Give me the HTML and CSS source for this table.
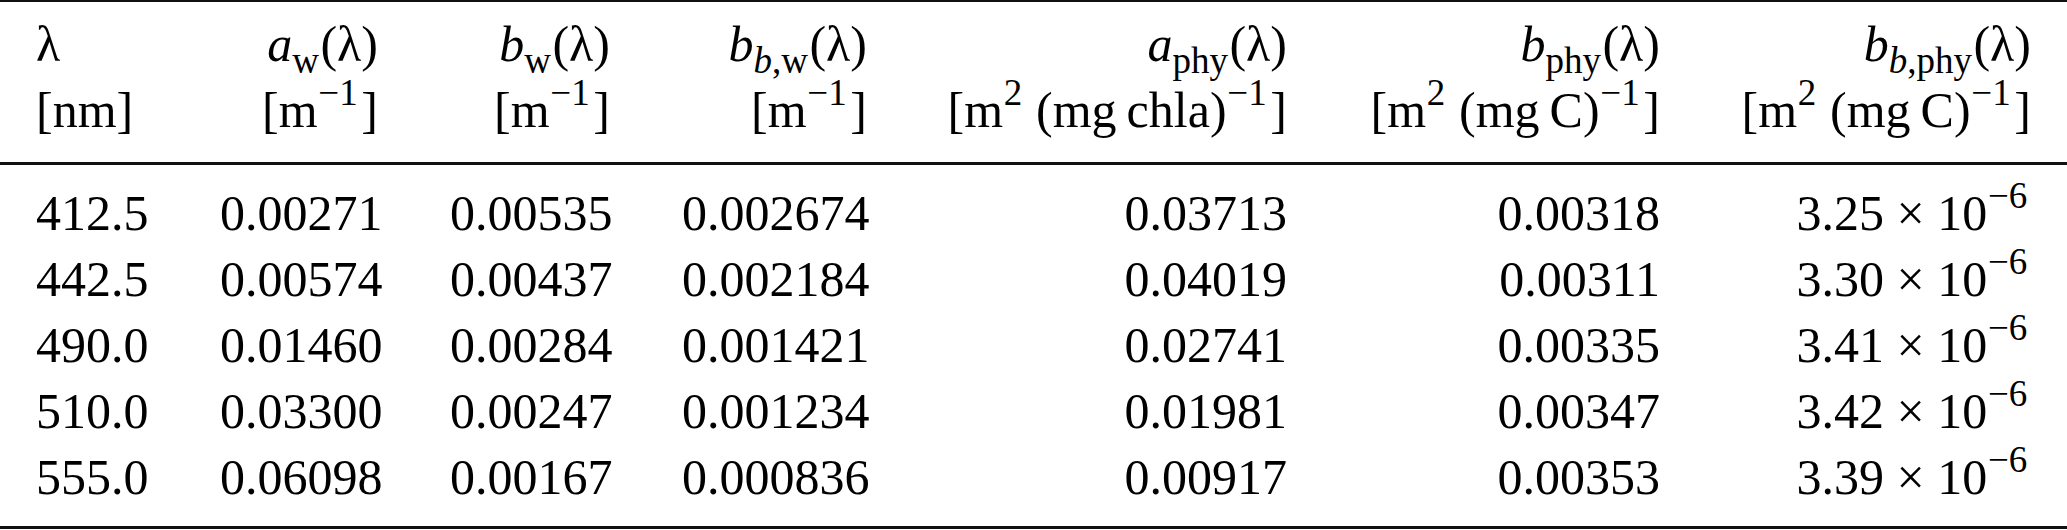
FILE: index.html
```html
<!DOCTYPE html>
<html lang="en">
<head>
    <meta charset="UTF-8">
    <meta name="viewport" content="width=device-width, initial-scale=1.0">
    <title>Optical constants</title>
    <link rel="stylesheet" href="styles.css">
</head>
<body>
    <table class="optics">
        <colgroup>
            <col class="c-lambda">
            <col class="c-aw">
            <col class="c-bw">
            <col class="c-bbw">
            <col class="c-aphy">
            <col class="c-bphy">
            <col class="c-bbphy">
        </colgroup>
        <thead>
            <tr class="head-row">
                <th class="left">λ</th>
                <th><i>a</i><sub>w</sub>(λ)</th>
                <th><i>b</i><sub>w</sub>(λ)</th>
                <th><i>b</i><sub><i>b</i>,w</sub>(λ)</th>
                <th><i>a</i><sub>phy</sub>(λ)</th>
                <th><i>b</i><sub>phy</sub>(λ)</th>
                <th><i>b</i><sub><i>b</i>,phy</sub>(λ)</th>
            </tr>
            <tr class="unit-row">
                <th class="left">[nm]</th>
                <th>[m<sup>−1</sup>]</th>
                <th>[m<sup>−1</sup>]</th>
                <th>[m<sup>−1</sup>]</th>
                <th>[m<sup>2</sup>&thinsp;(mg&thinsp;chla)<sup>−1</sup>]</th>
                <th>[m<sup>2</sup>&thinsp;(mg&thinsp;C)<sup>−1</sup>]</th>
                <th>[m<sup>2</sup>&thinsp;(mg&thinsp;C)<sup>−1</sup>]</th>
            </tr>
        </thead>
        <tbody>
            <tr>
                <td class="left">412.5</td>
                <td>0.00271</td>
                <td>0.00535</td>
                <td>0.002674</td>
                <td>0.03713</td>
                <td>0.00318</td>
                <td>3.25 × 10<sup>−6</sup></td>
            </tr>
            <tr>
                <td class="left">442.5</td>
                <td>0.00574</td>
                <td>0.00437</td>
                <td>0.002184</td>
                <td>0.04019</td>
                <td>0.00311</td>
                <td>3.30 × 10<sup>−6</sup></td>
            </tr>
            <tr>
                <td class="left">490.0</td>
                <td>0.01460</td>
                <td>0.00284</td>
                <td>0.001421</td>
                <td>0.02741</td>
                <td>0.00335</td>
                <td>3.41 × 10<sup>−6</sup></td>
            </tr>
            <tr>
                <td class="left">510.0</td>
                <td>0.03300</td>
                <td>0.00247</td>
                <td>0.001234</td>
                <td>0.01981</td>
                <td>0.00347</td>
                <td>3.42 × 10<sup>−6</sup></td>
            </tr>
            <tr>
                <td class="left">555.0</td>
                <td>0.06098</td>
                <td>0.00167</td>
                <td>0.000836</td>
                <td>0.00917</td>
                <td>0.00353</td>
                <td>3.39 × 10<sup>−6</sup></td>
            </tr>
        </tbody>
    </table>
</body>
</html>
```

FILE: styles.css
```css
body {
    margin: 0;
    background: #fff;
    color: #000;
    font-family: "Liberation Serif", "Times New Roman", serif;
}
.optics {
    width: 2067px;
    table-layout: fixed;
    border-collapse: separate;
    border-spacing: 0;
    font-size: 50px;
    line-height: 66px;
}
.c-lambda { width: 184px; }
.c-aw { width: 230px; }
.c-bw { width: 232px; }
.c-bbw { width: 257px; }
.c-aphy { width: 420px; }
.c-bphy { width: 373px; }
.c-bbphy { width: 371px; }

.optics th,
.optics td {
    padding: 0 36px;
    text-align: right;
    font-weight: normal;
    white-space: nowrap;
    vertical-align: baseline;
}
.optics .left {
    text-align: left;
}
.head-row th {
    border-top: 2px solid #111;
    padding-top: 9px;
}
.unit-row th {
    border-bottom: 3px solid #111;
    padding-bottom: 19px;
}
tbody tr:first-child td {
    padding-top: 15px;
}
tbody tr:last-child td {
    border-bottom: 3px solid #111;
    padding-bottom: 16px;
}
sub, sup {
    font-size: 0.74em;
    line-height: 0;
    position: relative;
    vertical-align: baseline;
}
sub {
    top: 0.32em;
    margin-right: 0.04em;
}
sup {
    top: -0.6em;
    margin-left: 0.02em;
    margin-right: 0.1em;
}
```
